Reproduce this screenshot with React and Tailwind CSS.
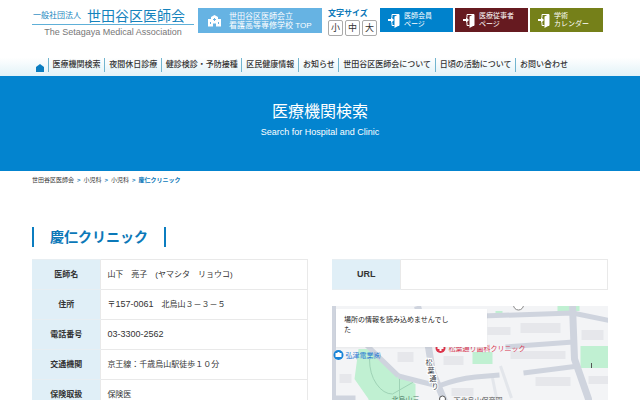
const navItems = [
  '医療機関検索',
  '夜間休日診療',
  '健診検診・予防接種',
  '区民健康情報',
  'お知らせ',
  '世田谷区医師会について',
  '日頃の活動について',
  'お問い合わせ',
]

const portals = [
  { lines: ['医師会員', 'ページ'], color: 'bg-[#0082cc]' },
  { lines: ['医療従事者', 'ページ'], color: 'bg-[#661a20]' },
  { lines: ['学術', 'カレンダー'], color: 'bg-[#758019]' },
]

const clinic = [
  { label: '医師名', value: '山下　亮子　(ヤマシタ　リョウコ)' },
  { label: '住所', value: <>〒<span className="text-[9px]">157-0061</span>　北烏山３－３－５</> },
  { label: '電話番号', value: <span className="text-[9px]">03-3300-2562</span> },
  { label: '交通機関', value: '京王線：千歳烏山駅徒歩１０分' },
  { label: '保険取扱', value: '保険医' },
]

const DoorIcon = () => (
  <svg viewBox="0 0 12 15" className="h-[15px] w-3 shrink-0" aria-hidden="true">
    <path d="M4 4.500V1.500H11V12.500H8" fill="none" stroke="white" strokeWidth="1" />
    <path d="M6.500 3.500L11 1V12.500L6.500 15z" fill="white" />
    <path d="M4 9.500V12.500H6.500" fill="none" stroke="white" strokeWidth="1" />
    <path d="M0 6H3V4L6 7 3 10V8H0z" fill="white" />
  </svg>
)

const SchoolIcon = () => (
  <svg viewBox="0 0 13 12" className="h-3 w-[13px] shrink-0" aria-hidden="true">
    <path d="M0 4H3V2L6.500 0 10 2V4H13V11.500H8V8.500H5V11.500H0z" fill="white" />
    <path d="M6 3h1v1h1v1h-1v1h-1v-1h-1v-1h1zM2 7h1v2h-1zM10 7h1v2h-1z" fill="#66b3e3" />
  </svg>
)

const Header = () => (
  <header className="flex items-start px-8 pt-2">
    <a href="#" className="mr-1 w-[162px] shrink-0">
      <span className="flex h-[17px] items-center gap-[6px] border-b border-[#5fb0d8] pl-px leading-4 whitespace-nowrap text-[#1583bd]">
        <span className="text-[8px]">一般社団法人</span>
        <span className="text-[14px]">世田谷区医師会</span>
      </span>
      <span className="block text-center text-[9px] leading-[14px] whitespace-nowrap text-[#777]">
        The Setagaya Medical Association
      </span>
    </a>
    <a href="#" className="flex h-[25px] w-[124px] shrink-0 items-center gap-2 bg-[#66b3e3] pl-[10px] text-white">
      <SchoolIcon />
      <span className="text-[8px] leading-[9px] whitespace-nowrap">
        世田谷区医師会立
        <br />
        看護高等専修学校 TOP
      </span>
    </a>
    <div className="mx-[6px] w-[46px] shrink-0">
      <p className="text-[8px] leading-3 font-bold whitespace-nowrap text-[#0b78b8]">文字サイズ</p>
      <div className="flex gap-[2px]">
        {['小', '中', '大'].map((size) => (
          <button key={size} className="h-4 w-[15px] shrink-0 rounded-xs border border-[#aaa] bg-white text-[9px] leading-3 text-[#333]">
            {size}
          </button>
        ))}
      </div>
    </div>
    <div className="flex min-w-0 grow gap-[2px] pr-[5px]">
      {portals.map((portal) => (
        <a key={portal.lines[0]} href="#" className={`flex h-6 flex-1 items-center gap-1 pl-2 text-white ${portal.color}`}>
          <DoorIcon />
          <span className="text-[7px] leading-2 whitespace-nowrap">
            {portal.lines[0]}
            <br />
            {portal.lines[1]}
          </span>
        </a>
      ))}
    </div>
  </header>
)

const Nav = () => (
  <nav className="bg-linear-to-b from-white from-50% to-[#e2f2f8] pt-[18px] pr-[72px] pb-[3px] pl-9">
    <ul className="flex items-center justify-between">
      <li className="flex h-4 items-end pb-px">
        <a href="#" aria-label="ホーム">
          <svg viewBox="0 0 8 8" className="size-2" aria-hidden="true">
            <path d="M4 0L8 3V8H0V3z" fill="#0b7dc0" />
          </svg>
        </a>
      </li>
      {navItems.map((item) => (
        <li key={item} className="border-l border-[#72b5cf] pl-1">
          <a href="#" className="block text-[8px] leading-[14px] font-medium whitespace-nowrap text-[#333]">{item}</a>
        </li>
      ))}
    </ul>
  </nav>
)

const roads = [
  'M2 0V130',
  'M30 34L37 41L67 70',
  'M67 70Q90 76 107 80Q125 73 144 71L168 69',
  'M0 92H24',
  'M150 10L241 7L280 15',
  'M174 41L242 36',
  'M192 67L247 60',
]

const buildings = [
  [156, 21, 23, 8],
  [189, 17, 40, 10],
  [179, 45, 55, 8],
  [204, 71, 35, 9],
  [250, 24, 22, 10],
  [257, 70, 20, 8],
  [8, 68, 12, 9],
  [66, 46, 16, 10],
  [112, 50, 20, 9],
  [120, 82, 22, 8],
]

const AreaMap = () => (
  <div className="relative h-[130px] overflow-hidden bg-[#f3f4f6]">
    <svg viewBox="0 0 277 130" preserveAspectRatio="xMidYMin slice" className="h-full w-full">
      <g fill="#e6e7eb">
        {buildings.map(([x, y, w, h]) => (
          <rect key={`${x}-${y}`} x={x} y={y} width={w} height={h} />
        ))}
      </g>
      <g fill="#c0f0d2">
        <path d="M27 43H38L60 66L84 78V130H37V93L23 73Z" />
        <path d="M141 46h20v12h-20zM249 40h28v22h-28zM226 0h22v5h-22zM164 5h7v4h-7z" />
      </g>
      <path d="M38 53Q38 68 45 78Q52 88 61 88L82 76M68 72V92" fill="none" stroke="#9fd3b6" />
      <path d="M169 60L180 92M161 72L165 92" fill="none" stroke="#e3e6eb" strokeWidth="3" />
      <g fill="none" stroke="#cfd4de" strokeWidth="5" strokeLinejoin="round">
        {roads.map((d) => <path key={d} d={d} />)}
        <path d="M86 0L97 41L101 66L115 100V130M241 0L243 53L257 93V130" strokeWidth="7" />
      </g>
      <circle cx="187" cy="-1" r="5" fill="#fff" stroke="#888" />
      <circle cx="111" cy="93" r="3" fill="#fff" stroke="#555" />
      <path d="M260 57v5" stroke="#555" />
      <circle cx="7" cy="49" r="5" fill="#1683d8" />
      <path d="M4 47h6v4h-6zM6 46h2v1h-2z" fill="white" />
      <circle cx="109" cy="42" r="5" fill="#dd3349" />
      <path d="M109 39v6M106 42h6" stroke="white" strokeWidth="2" />
      <g fontSize="7">
        <text x="14" y="52" fill="#2b7bd2">弘津電業㈱</text>
        <text x="117" y="45" fill="#d93a55">松葉通り歯科クリニック</text>
        <text x="60" y="96" fill="#4f7f68">北烏山三</text>
        <text x="122" y="97" fill="#555">下北烏山保育園</text>
        <g fill="#3c424b" stroke="white" strokeWidth="2" paintOrder="stroke">
          <text x="94" y="59">松</text>
          <text x="96" y="67">葉</text>
          <text x="98" y="75">通</text>
          <text x="100" y="83">り</text>
        </g>
      </g>
    </svg>
    <div className="absolute top-[3px] left-1 h-[38px] w-[151px] bg-white px-2 py-[6px] text-[7px] leading-[10px] text-[#222] shadow-xs">
      場所の情報を読み込めませんでし
      <br />た
    </div>
  </div>
)

const th = 'h-[30px] w-1/4 border-y border-[#e7eef2] bg-[#e0eff7] text-center font-bold text-[#333]'
const td = 'border border-[#e9e9e9] px-[6px] text-[#333]'

const App = () => (
  <div className="bg-white font-['Liberation_Sans','Noto_Sans_CJK_JP',sans-serif]">
    <Header />
    <Nav />
    <section className="bg-[#0384cf] pt-6 pb-[31px] text-center text-white">
      <h1 className="text-[16px] leading-6">医療機関検索</h1>
      <p className="text-[9px] leading-4">Search for Hospital and Clinic</p>
    </section>
    <main className="px-8">
      <nav className="flex gap-[3px] pt-1 text-[6px] leading-[10px] text-[#333]">
        <a href="#">世田谷区医師会</a>
        <span className="font-bold text-[#0b78b8]">&gt;</span>
        <a href="#">小児科</a>
        <span className="font-bold text-[#0b78b8]">&gt;</span>
        <a href="#">小児科</a>
        <span className="font-bold text-[#0b78b8]">&gt;</span>
        <span className="font-bold text-[#0b78b8]">慶仁クリニック</span>
      </nav>
      <h2 className="mt-[42px] inline-block border-x-2 border-[#0b7dc0] px-4 text-[14px] leading-5 font-bold text-[#0b78b8]">
        慶仁クリニック
      </h2>
      <div className="mt-[10px] grid grid-cols-2 items-start gap-6">
        <table className="w-full table-fixed border-collapse text-[8px]">
          <tbody>
            {clinic.map((row) => (
              <tr key={row.label}>
                <th scope="row" className={th}>{row.label}</th>
                <td className={td}>{row.value}</td>
              </tr>
            ))}
          </tbody>
        </table>
        <div>
          <table className="mb-4 w-full table-fixed border-collapse text-[9px]">
            <tbody>
              <tr>
                <th scope="row" className={th}>URL</th>
                <td className={td}></td>
              </tr>
            </tbody>
          </table>
          <AreaMap />
        </div>
      </div>
    </main>
  </div>
)

export default App
